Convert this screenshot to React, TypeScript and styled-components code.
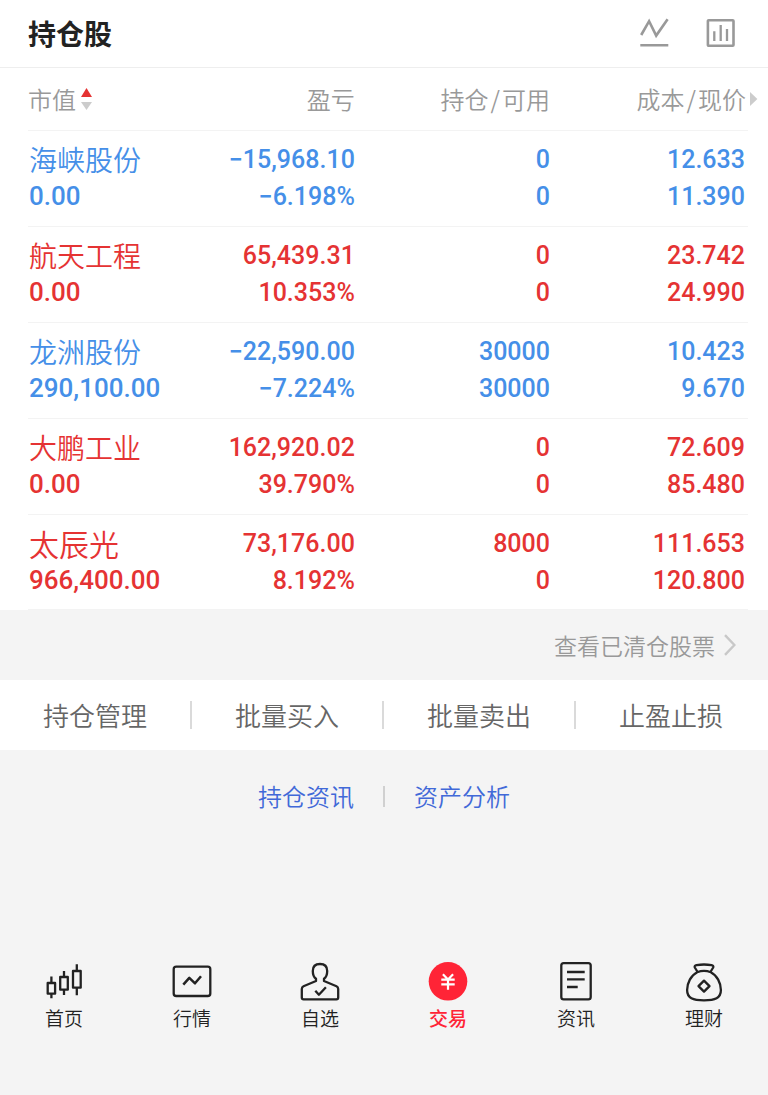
import React from "react";
import styled, { createGlobalStyle } from "styled-components";

const GlobalStyle = createGlobalStyle`
  *, *::before, *::after { box-sizing: border-box; }
  body {
    margin: 0;
    background: #f4f4f4;
    font-family: "Noto Sans CJK SC", sans-serif;
    font-weight: 350;
    color: #222;
  }
  button { font: inherit; color: inherit; background: none; border: 0; padding: 0; cursor: pointer; }
  a { color: inherit; text-decoration: none; }
`;

const Page = styled.div`
  min-height: 100vh;
  display: flex;
  flex-direction: column;
`;

const Panel = styled.section`
  background: #fff;
`;

const TitleBar = styled.header`
  display: flex;
  align-items: center;
  justify-content: space-between;
  height: 68px;
  padding: 0 32px 2px 28px;
  border-bottom: 1px solid #eeeeee;
`;

const Title = styled.h1`
  margin: 0;
  font-size: 28px;
  line-height: 40px;
  font-weight: 700;
`;

const Tools = styled.div`
  display: flex;
  gap: 37px;
`;

const ToolButton = styled.button`
  display: flex;
  svg { width: 30px; height: 30px; fill: none; stroke: #999; stroke-width: 2.6; }
`;

const TableWrap = styled.div`
  padding: 0 20px 0 28px;
`;

const Holdings = styled.table`
  width: 100%;
  table-layout: fixed;
  border-collapse: separate;
  border-spacing: 0;
`;

const HeadCell = styled.th<{ $edge?: boolean }>`
  position: relative;
  height: 63px;
  padding: 0 ${(p) => (p.$edge ? 2 : 0)}px 0 0;
  border-bottom: 1px solid #f3f3f3;
  font-size: 24px;
  line-height: 36px;
  font-weight: 350;
  color: #999;
  text-align: right;
  white-space: nowrap;
  &:first-child { text-align: left; }
`;

const Slash = styled.span`
  margin: 0 2px;
`;

const SortButton = styled.button`
  display: inline-flex;
  align-items: center;
  gap: 5px;
  svg { width: 11px; height: 22px; }
`;

const MoreArrow = styled.svg`
  position: absolute;
  left: 100%;
  top: 24px;
  margin-left: 2px;
  width: 8px;
  height: 14px;
  fill: #ccc;
`;

const Name = styled.span<{ $large: boolean }>`
  display: block;
  height: 37px;
  font-size: ${(p) => (p.$large ? 30 : 28)}px;
  line-height: 37px;
`;

const Figure = styled.span<{ $wide?: boolean }>`
  display: block;
  height: 37px;
  font-family: Roboto, "Noto Sans CJK SC", sans-serif;
  font-size: ${(p) => (p.$wide ? 26 : 25)}px;
  line-height: 37px;
  font-weight: 500;
`;

const Cell = styled.td<{ $edge?: boolean }>`
  padding: 10px ${(p) => (p.$edge ? 3 : 0)}px 11px 0;
  border-bottom: 1px solid #f3f3f3;
  text-align: right;
  white-space: nowrap;
  &:first-child { padding-left: 1px; text-align: left; }
`;

const Row = styled.tr<{ $up: boolean }>`
  color: ${(p) => (p.$up ? "#e53333" : "#458fe8")};
  &:last-child ${Cell} { padding-bottom: 10px; }
`;

const ClearedBar = styled.div`
  display: flex;
  justify-content: flex-end;
  align-items: center;
  height: 70px;
  padding-right: 32px;
`;

const ClearedLink = styled.a`
  display: flex;
  align-items: center;
  gap: 9px;
  font-size: 23px;
  line-height: 36px;
  color: #999;
  svg { width: 12px; height: 22px; fill: none; stroke: #c8c8c8; stroke-width: 2.4; }
`;

const Actions = styled.div`
  display: grid;
  grid-template-columns: repeat(4, 1fr);
  align-items: center;
  height: 70px;
  background: #fff;
`;

const Action = styled.button`
  height: 28px;
  font-size: 26px;
  line-height: 28px;
  color: #666;
  border-right: 2px solid #dadada;
  &:last-child { border-right-color: transparent; }
`;

const Links = styled.div`
  display: flex;
  justify-content: center;
  align-items: center;
  padding: 28px 0;
`;

const InfoLink = styled.a`
  padding: 0 29px;
  font-size: 24px;
  line-height: 36px;
  color: #4169d8;
`;

const LinkDivider = styled.span`
  width: 2px;
  height: 21px;
  background: #d0d0d0;
`;

const TabBar = styled.nav`
  display: grid;
  grid-template-columns: repeat(6, 1fr);
  margin-top: auto;
  padding-bottom: 65px;
`;

const Tab = styled.a<{ $active?: boolean }>`
  display: flex;
  flex-direction: column;
  align-items: center;
  gap: 5px;
  font-size: 19px;
  line-height: 24px;
  color: ${(p) => (p.$active ? "#ff2436" : "#222")};
  font-weight: ${(p) => (p.$active ? 500 : 350)};
  svg {
    width: 40px;
    height: 40px;
    overflow: visible;
    fill: none;
    stroke: #222;
    stroke-width: 2.3;
    stroke-linejoin: round;
  }
`;

interface Holding {
  name: string;
  value: string;
  profit: string;
  rate: string;
  held: string;
  usable: string;
  cost: string;
  price: string;
  up: boolean;
}

const holdings: Holding[] = [
  { name: "海峡股份", value: "0.00", profit: "−15,968.10", rate: "−6.198%", held: "0", usable: "0", cost: "12.633", price: "11.390", up: false },
  { name: "航天工程", value: "0.00", profit: "65,439.31", rate: "10.353%", held: "0", usable: "0", cost: "23.742", price: "24.990", up: true },
  { name: "龙洲股份", value: "290,100.00", profit: "−22,590.00", rate: "−7.224%", held: "30000", usable: "30000", cost: "10.423", price: "9.670", up: false },
  { name: "大鹏工业", value: "0.00", profit: "162,920.02", rate: "39.790%", held: "0", usable: "0", cost: "72.609", price: "85.480", up: true },
  { name: "太辰光", value: "966,400.00", profit: "73,176.00", rate: "8.192%", held: "8000", usable: "0", cost: "111.653", price: "120.800", up: true },
];

const actions = ["持仓管理", "批量买入", "批量卖出", "止盈止损"];

const tabs: { label: string; active?: boolean; icon: React.ReactNode }[] = [
  {
    label: "首页",
    icon: (
      <svg viewBox="0 0 40 40" aria-hidden="true">
        <rect x="3.7" y="22" width="7.4" height="10.7" />
        <path d="M7.4 15.5V22M7.4 32.7V37.3" />
        <rect x="16.2" y="16" width="7.6" height="12.7" />
        <path d="M20 10V16M20 28.7V34" />
        <rect x="29" y="10" width="7.7" height="16.7" />
        <path d="M32.8 3.3V10M32.8 26.7V34.3" />
      </svg>
    ),
  },
  {
    label: "行情",
    icon: (
      <svg viewBox="0 0 40 40" aria-hidden="true">
        <rect x="1.7" y="5.7" width="36.6" height="29.3" rx="2.6" />
        <path d="M11.3 23.7L17.3 16.9L23 22.3L29 15.2" strokeWidth="2.5" />
      </svg>
    ),
  },
  {
    label: "自选",
    icon: (
      <svg viewBox="0 0 40 40" aria-hidden="true">
        <path d="M16 17.8C13.5 16 12.8 13 12.8 10C12.8 5.5 15.5 3 20 3S27.2 5.5 27.2 10C27.2 13 26.5 16 24 17.8V20L36.5 25.2Q38.2 26 38.2 28V36.5Q38.2 38.3 36.4 38.3H3.6Q1.8 38.3 1.8 36.5V28Q1.8 26 3.5 25.2L16 20Z" />
        <path d="M15.3 29.7L18.9 33.7L25.9 26.2" />
      </svg>
    ),
  },
  {
    label: "交易",
    active: true,
    icon: (
      <svg viewBox="0 0 40 40" aria-hidden="true">
        <circle cx="20" cy="20.3" r="19.3" fill="#ff2436" stroke="none" />
        <path d="M14.9 13.2L20 18.4L25.1 13.2M20 18V28.7M13.3 18.6H26.7M13.3 23.4H26.7" stroke="#fff" strokeWidth="2.2" />
      </svg>
    ),
  },
  {
    label: "资讯",
    icon: (
      <svg viewBox="0 0 40 40" aria-hidden="true">
        <rect x="5.3" y="2.1" width="29.4" height="36.2" rx="2.4" />
        <path d="M11 11H28.7M11 18.4H28.7M11 26H21.7" />
      </svg>
    ),
  },
  {
    label: "理财",
    icon: (
      <svg viewBox="0 0 40 40" aria-hidden="true">
        <path d="M13.6 11L10.8 6.5C10.3 5.2 11 4.4 12.5 4.1Q20 2.9 27.5 4.1C29 4.4 29.7 5.2 29.2 6.5L26.4 11" />
        <path d="M13.2 11.2Q20 8.4 26.8 11.2C33 14.3 36.9 22 36.9 29C36.9 37.2 31 39.4 20 39.4S3.1 37.2 3.1 29C3.1 22 7 14.3 13.2 11.2Z" />
        <path d="M20 19.6L25.5 25.1L20 30.6L14.5 25.1Z" />
      </svg>
    ),
  },
];

export default function App() {
  return (
    <>
      <GlobalStyle />
      <Page>
        <Panel>
          <TitleBar>
            <Title>持仓股</Title>
            <Tools>
              <ToolButton type="button" aria-label="走势">
                <svg viewBox="0 0 30 30">
                  <path d="M2.2 17L10.1 3.2L17.2 17.6L28.6 1.2M1.3 27.3H29.3" />
                </svg>
              </ToolButton>
              <ToolButton type="button" aria-label="统计">
                <svg viewBox="0 0 30 30">
                  <rect x="1.9" y="2.3" width="25.6" height="25.4" rx="0.8" />
                  <path d="M8.3 13.3V23M14.7 7V23M21 11V23" strokeWidth="2.3" />
                </svg>
              </ToolButton>
            </Tools>
          </TitleBar>
          <TableWrap>
            <Holdings>
              <colgroup>
                <col style={{ width: "18.6%" }} />
                <col style={{ width: "26.8%" }} />
                <col style={{ width: "27.1%" }} />
                <col style={{ width: "27.5%" }} />
              </colgroup>
              <thead>
                <tr>
                  <HeadCell scope="col">
                    <SortButton type="button">
                      市值
                      <svg viewBox="0 0 11 22" aria-hidden="true">
                        <path d="M5.5 0L11 9H0Z" fill="#e53333" />
                        <path d="M0 14H11L5.5 22Z" fill="#ccc" />
                      </svg>
                    </SortButton>
                  </HeadCell>
                  <HeadCell scope="col">盈亏</HeadCell>
                  <HeadCell scope="col">
                    持仓<Slash>/</Slash>可用
                  </HeadCell>
                  <HeadCell scope="col" $edge>
                    成本<Slash>/</Slash>现价
                    <MoreArrow viewBox="0 0 8 14" aria-hidden="true">
                      <path d="M0 0L7.4 7L0 14Z" />
                    </MoreArrow>
                  </HeadCell>
                </tr>
              </thead>
              <tbody>
                {holdings.map((h) => (
                  <Row key={h.name} $up={h.up}>
                    <Cell>
                      <Name $large={h.name.length < 4}>{h.name}</Name>
                      <Figure $wide>{h.value}</Figure>
                    </Cell>
                    <Cell>
                      <Figure>{h.profit}</Figure>
                      <Figure>{h.rate}</Figure>
                    </Cell>
                    <Cell>
                      <Figure>{h.held}</Figure>
                      <Figure>{h.usable}</Figure>
                    </Cell>
                    <Cell $edge>
                      <Figure>{h.cost}</Figure>
                      <Figure>{h.price}</Figure>
                    </Cell>
                  </Row>
                ))}
              </tbody>
            </Holdings>
          </TableWrap>
        </Panel>
        <ClearedBar>
          <ClearedLink href="#cleared">
            查看已清仓股票
            <svg viewBox="0 0 12 22" aria-hidden="true">
              <path d="M1 1.2L10.4 11L1 20.8" />
            </svg>
          </ClearedLink>
        </ClearedBar>
        <Actions>
          {actions.map((a) => (
            <Action key={a} type="button">
              {a}
            </Action>
          ))}
        </Actions>
        <Links>
          <InfoLink href="#news">持仓资讯</InfoLink>
          <LinkDivider />
          <InfoLink href="#analysis">资产分析</InfoLink>
        </Links>
        <TabBar>
          {tabs.map((t) => (
            <Tab key={t.label} href={"#" + t.label} $active={t.active} aria-current={t.active ? "page" : undefined}>
              {t.icon}
              {t.label}
            </Tab>
          ))}
        </TabBar>
      </Page>
    </>
  );
}
